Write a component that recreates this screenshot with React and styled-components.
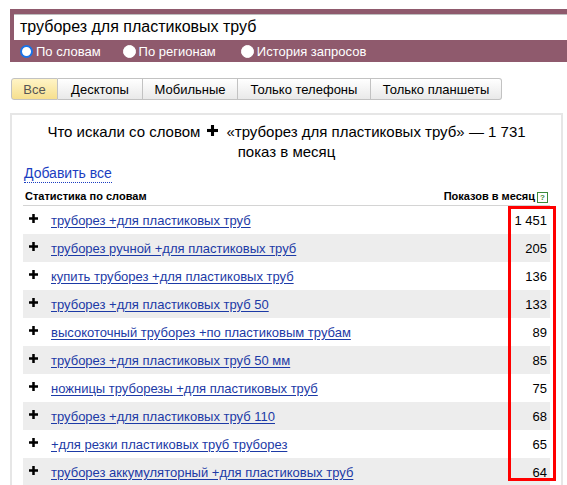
import React from "react";
import styled, { createGlobalStyle } from "styled-components";

const Global = createGlobalStyle`
  html, body { margin: 0; padding: 0; background: #fff; }
  body { font-family: "Liberation Sans", Arial, sans-serif; overflow: hidden; }
`;

const Page = styled.div`
  width: 567px;
  height: 485px;
  overflow: hidden;
  padding-top: 9px;
  box-sizing: border-box;
`;

const Header = styled.div`
  margin-left: 10px;
  background: #8f5a6d;
  padding: 5px 0 0 4px;
  height: 53px;
  box-sizing: border-box;
`;

const SearchInput = styled.div`
  height: 26px;
  background: #fff;
  border-top: 1px solid #bdbdbd;
  box-sizing: border-box;
  padding-left: 6px;
  font-size: 16px;
  line-height: 24px;
  color: #000;
`;

const RadioRow = styled.div`
  display: flex;
  align-items: center;
  height: 22px;
  padding-left: 6px;
`;

const RadioItem = styled.label`
  display: flex;
  align-items: center;
  gap: 3px;
  color: #fff;
  font-size: 13px;
  margin-right: ${(p) => p.$gap}px;
`;

const RadioDot = styled.span`
  width: 13px;
  height: 13px;
  border-radius: 50%;
  box-sizing: border-box;
  background: #fff;
  border: ${(p) => (p.$checked ? "2px solid #1a73e8" : "1px solid #fff")};
`;

const Tabs = styled.div`
  display: flex;
  margin: 16px 0 0 11px;
  height: 22px;
`;

const Tab = styled.div`
  height: 22px;
  box-sizing: border-box;
  width: ${(p) => p.$w}px;
  border: 1px solid #c2c2c2;
  border-left: ${(p) => (p.$first ? "1px solid #c2c2c2" : "none")};
  border-radius: ${(p) => (p.$first ? "3px 0 0 3px" : p.$last ? "0 3px 3px 0" : "0")};
  background: ${(p) =>
    p.$active
      ? "linear-gradient(#fff4c6, #f6df8e)"
      : "linear-gradient(#ffffff, #e9e9e9)"};
  color: ${(p) => (p.$active ? "#555" : "#000")};
  font-size: 13px;
  display: flex;
  align-items: center;
  justify-content: center;
`;

const Panel = styled.div`
  margin: 13px 0 0 10px;
  width: 553px;
  border: 2px solid #e6e6e6;
  border-bottom: none;
  box-sizing: border-box;
  padding: 6px 11px 0;
  height: 400px;
`;

const Title = styled.div`
  text-align: center;
  font-size: 15px;
  line-height: 20px;
  color: #000;
`;

const Plus = ({ size = 10 }) => (
  <svg width={size} height={size} viewBox="0 0 10 10" style={{ display: "inline-block" }}>
    <rect x="3.6" y="0" width="2.8" height="10" fill="#000" />
    <rect x="0" y="3.6" width="10" height="2.8" fill="#000" />
  </svg>
);

const TitlePlus = styled.span`
  display: inline-block;
  margin: 0 8px 0 7px;
  vertical-align: 1px;
`;

const AddAll = styled.a`
  display: inline-block;
  margin: 2px 0 0 1px;
  font-size: 14px;
  line-height: 18px;
  color: #1a3dc1;
  text-decoration: none;
  border-bottom: 1px dotted #1a3dc1;
`;

const StatHead = styled.div`
  display: flex;
  justify-content: space-between;
  align-items: center;
  margin-top: 7px;
  padding: 0 2px 2px 2px;
  border-bottom: 1px solid #d4d4d4;
  font-size: 11px;
  font-weight: bold;
  line-height: 13px;
  color: #000;
`;

const HelpIcon = styled.span`
  display: inline-block;
  width: 9px;
  height: 9px;
  border: 1px solid #3b8a3b;
  color: #3b8a3b;
  font-size: 8px;
  line-height: 9px;
  text-align: center;
  margin-left: 2px;
  vertical-align: 0px;
`;

const Table = styled.div`
  position: relative;
`;

const Row = styled.div`
  display: flex;
  align-items: center;
  height: 28px;
  background: ${(p) => (p.$alt ? "#ededed" : "#fff")};
  font-size: 13px;
`;

const PlusCell = styled.span`
  width: 28px;
  padding-left: 6px;
  box-sizing: border-box;
  display: flex;
  align-items: center;
  margin-top: -3px;
`;

const Phrase = styled.a`
  flex: 1;
  color: #1c3aa6;
  text-decoration: underline;
  text-underline-offset: 2px;
`;

const Count = styled.span`
  padding-right: 3px;
  color: #000;
`;

const Highlight = styled.div`
  position: absolute;
  left: 485px;
  top: 0;
  width: 48px;
  height: 275px;
  border: 3px solid #f00;
  box-sizing: border-box;
`;

const rows = [
  ["труборез +для пластиковых труб", "1 451"],
  ["труборез ручной +для пластиковых труб", "205"],
  ["купить труборез +для пластиковых труб", "136"],
  ["труборез +для пластиковых труб 50", "133"],
  ["высокоточный труборез +по пластиковым трубам", "89"],
  ["труборез +для пластиковых труб 50 мм", "85"],
  ["ножницы труборезы +для пластиковых труб", "75"],
  ["труборез +для пластиковых труб 110", "68"],
  ["+для резки пластиковых труб труборез", "65"],
  ["труборез аккумуляторный +для пластиковых труб", "64"],
];

const tabs = [
  ["Все", 47],
  ["Десктопы", 85],
  ["Мобильные", 95],
  ["Только телефоны", 133],
  ["Только планшеты", 131],
];

export default function App() {
  return (
    <Page>
      <Global />
      <Header>
        <SearchInput>труборез для пластиковых труб</SearchInput>
        <RadioRow>
          <RadioItem $gap={22}>
            <RadioDot $checked />
            По словам
          </RadioItem>
          <RadioItem $gap={25}>
            <RadioDot />
            По регионам
          </RadioItem>
          <RadioItem $gap={0}>
            <RadioDot />
            История запросов
          </RadioItem>
        </RadioRow>
      </Header>
      <Tabs>
        {tabs.map(([t, w], i) => (
          <Tab key={t} $w={w} $active={i === 0} $first={i === 0} $last={i === tabs.length - 1}>
            {t}
          </Tab>
        ))}
      </Tabs>
      <Panel>
        <Title>
          Что искали со словом
          <TitlePlus>
            <Plus size={11} />
          </TitlePlus>
          «труборез для пластиковых труб» — 1 731
          <br />
          показ в месяц
        </Title>
        <AddAll href="#">Добавить все</AddAll>
        <StatHead>
          <span>Статистика по словам</span>
          <span>
            Показов в месяц<HelpIcon>?</HelpIcon>
          </span>
        </StatHead>
        <Table>
          {rows.map(([p, c], i) => (
            <Row key={p} $alt={i % 2 === 1}>
              <PlusCell>
                <Plus size={9} />
              </PlusCell>
              <Phrase href="#">{p}</Phrase>
              <Count>{c}</Count>
            </Row>
          ))}
          <Highlight />
        </Table>
      </Panel>
    </Page>
  );
}
